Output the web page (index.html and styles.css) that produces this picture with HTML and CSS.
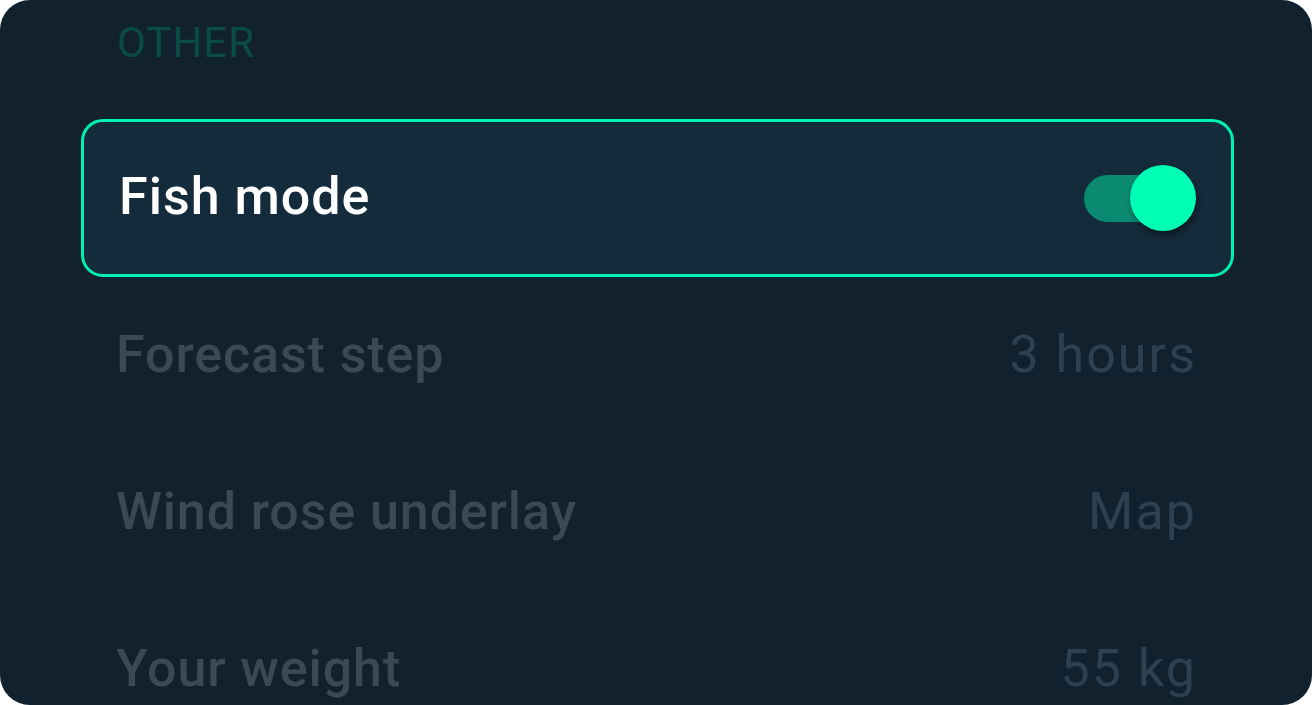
FILE: index.html
```html
<!DOCTYPE html>
<html>
<head>
<meta charset="utf-8">
<link rel="stylesheet" href="styles.css">
</head>
<body>
<div class="panel">
  <div class="section-title">OTHER</div>
  <div class="card">
    <span class="card-label">Fish mode</span>
    <div class="toggle">
      <div class="toggle-track"></div>
      <div class="toggle-thumb"></div>
    </div>
  </div>
  <div class="row">
    <span class="row-label">Forecast step</span>
    <span class="row-value">3 hours</span>
  </div>
  <div class="row">
    <span class="row-label">Wind rose underlay</span>
    <span class="row-value">Map</span>
  </div>
  <div class="row">
    <span class="row-label">Your weight</span>
    <span class="row-value">55 kg</span>
  </div>
</div>
</body>
</html>
```
FILE: styles.css
```css
html, body {
  margin: 0;
  padding: 0;
  background: #ffffff;
}
body {
  width: 1312px;
  height: 705px;
  overflow: hidden;
  font-family: Roboto, "Liberation Sans", sans-serif;
}
.panel {
  box-sizing: border-box;
  width: 1312px;
  height: 705px;
  background: #11212e;
  border-radius: 30px;
  padding: 18px 78px 0 81px;
  overflow: hidden;
}
.section-title {
  font-size: 42px;
  line-height: 50px;
  font-weight: 400;
  letter-spacing: 1px;
  color: #0a4b46;
  padding-left: 36px;
  margin-bottom: 51px;
}
.card {
  box-sizing: border-box;
  height: 158px;
  border: 3px solid #00f2b0;
  border-radius: 22px;
  background: #142b3b;
  display: flex;
  align-items: center;
  justify-content: space-between;
  padding: 0 35px 0 35px;
}
.card-label {
  font-size: 52px;
  font-weight: 500;
  letter-spacing: 1px;
  color: #ffffff;
  position: relative;
  top: -2px;
}
.toggle {
  position: relative;
  width: 112px;
  height: 66px;
}
.toggle-track {
  position: absolute;
  left: 0;
  top: 10px;
  width: 100px;
  height: 47px;
  border-radius: 24px;
  background: #0a8a70;
}
.toggle-thumb {
  position: absolute;
  right: 0;
  top: 0;
  width: 66px;
  height: 66px;
  border-radius: 50%;
  background: #00ffb5;
  box-shadow: 2px 4px 6px rgba(0, 0, 0, 0.45);
}
.row {
  box-sizing: border-box;
  height: 157px;
  display: flex;
  align-items: center;
  justify-content: space-between;
  padding: 0 37px 3px 35px;
}
.row-label {
  font-size: 52px;
  font-weight: 500;
  letter-spacing: 0.9px;
  color: #394a56;
}
.row-value {
  font-size: 52px;
  font-weight: 400;
  color: #2e4150;
  letter-spacing: 2px;
}
```
